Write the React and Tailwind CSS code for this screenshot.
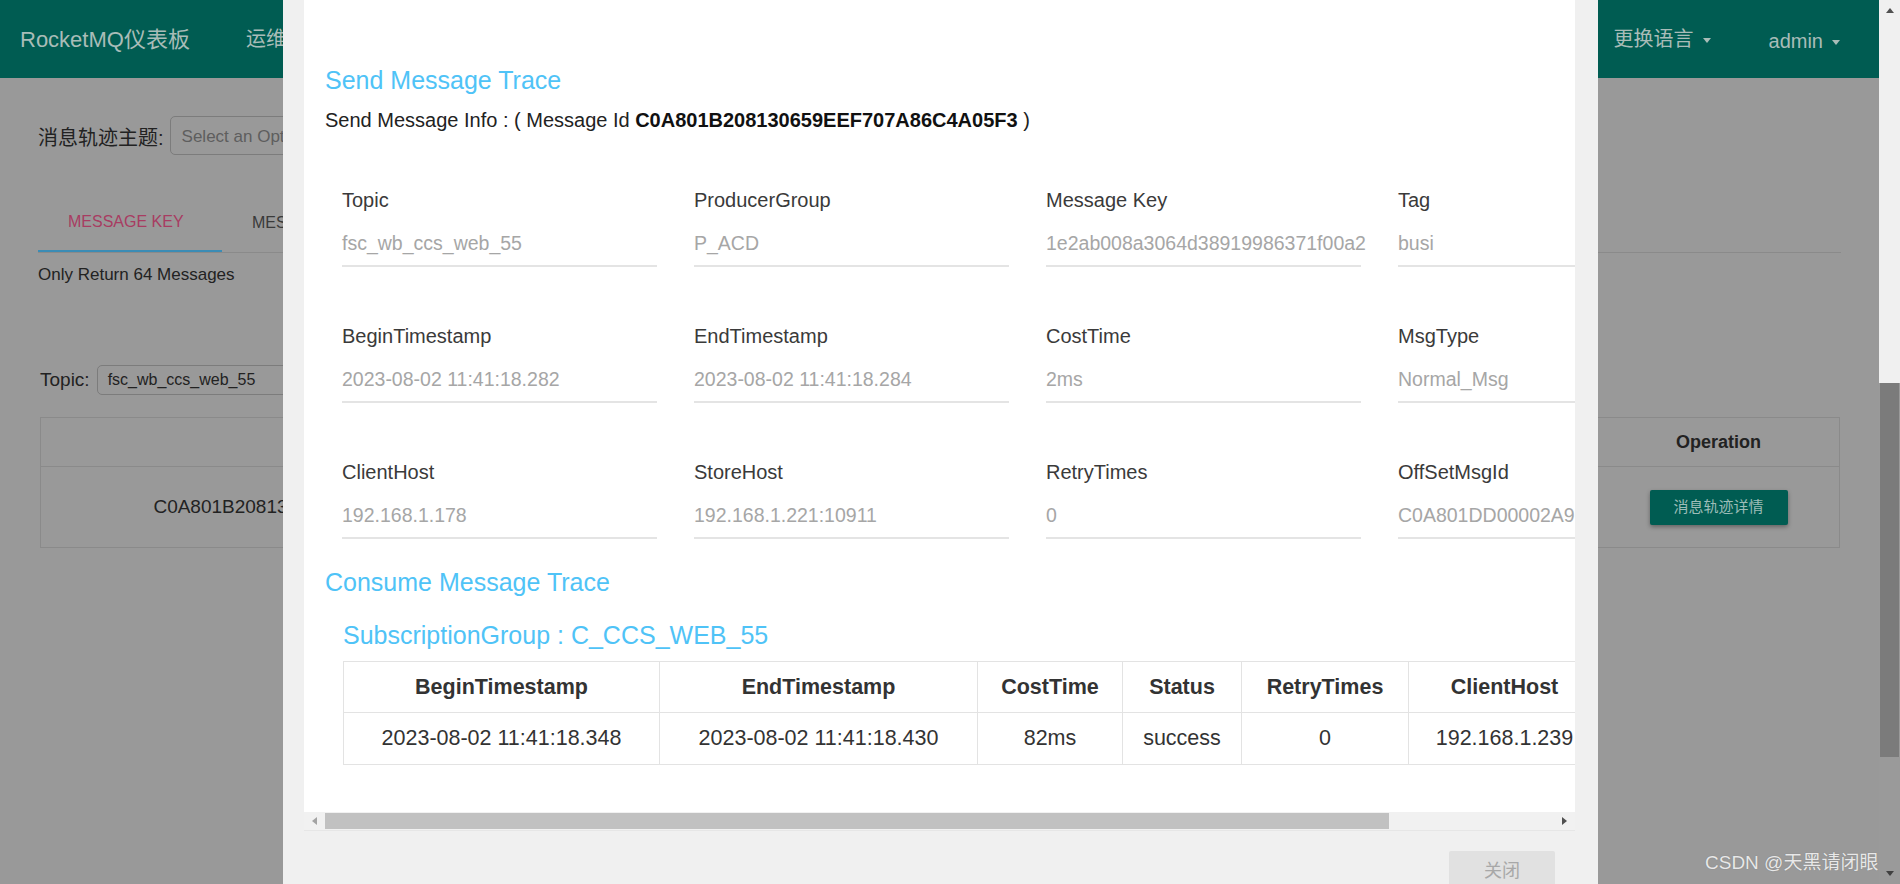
import React from 'react';

const fields = [
  [
    ['Topic', 'fsc_wb_ccs_web_55'],
    ['ProducerGroup', 'P_ACD'],
    ['Message Key', '1e2ab008a3064d38919986371f00a2'],
    ['Tag', 'busi'],
  ],
  [
    ['BeginTimestamp', '2023-08-02 11:41:18.282'],
    ['EndTimestamp', '2023-08-02 11:41:18.284'],
    ['CostTime', '2ms'],
    ['MsgType', 'Normal_Msg'],
  ],
  [
    ['ClientHost', '192.168.1.178'],
    ['StoreHost', '192.168.1.221:10911'],
    ['RetryTimes', '0'],
    ['OffSetMsgId', 'C0A801DD00002A9F0000000000B7C9E2'],
  ],
];

const consumeCols = ['BeginTimestamp', 'EndTimestamp', 'CostTime', 'Status', 'RetryTimes', 'ClientHost'];
const consumeRow = ['2023-08-02 11:41:18.348', '2023-08-02 11:41:18.430', '82ms', 'success', '0', '192.168.1.239'];

const Caret = ({ className = '' }) => (
  <span className={`inline-block ml-[9px] border-x-[4px] border-x-transparent border-t-[5px] border-t-[#a9bcb8] align-middle ${className}`} />
);

const Field = ({ label, value }) => (
  <div className="border-b-2 border-[#e4e4e4] pb-[10px]">
    <div className="text-[20px] leading-[24px] text-[#3a3a3a] whitespace-nowrap">{label}</div>
    <div className="mt-[19px] text-[19.5px] leading-[24px] text-[#a6a6a6] whitespace-nowrap">{value}</div>
  </div>
);

const Background = () => (
  <div className="flex h-full">
    <div className="w-[1879px] h-full bg-[#999999]">
      <header className="h-[78px] bg-[#005c52] flex items-center text-[#a9bcb8]">
        <div className="pl-5 text-[22px]">RocketMQ仪表板</div>
        <div className="ml-[56px] text-[20px]">运维</div>
        <div className="ml-auto flex items-center pr-[39px] text-[20px]">
          <span>更换语言<Caret /></span>
          <span className="ml-[58px] mt-[4px]">admin<Caret /></span>
        </div>
      </header>

      <div className="px-[38px] pt-[38px]">
        <div className="flex items-center h-[39px]">
          <span className="text-[20px] text-[#222] mt-[4px]">消息轨迹主题:</span>
          <div className="ml-[6px] h-[39px] w-[420px] rounded-[5px] border border-[#7c7c7c] flex items-center pl-[11px] pt-[3px] text-[17px] text-[#5e5e5e]">
            Select an Option
          </div>
        </div>

        <div className="mt-[39px] flex border-b border-[#8a8a8a]">
          <div className="h-[58px] w-[184px] pl-[30px] flex items-center border-b-2 border-[#3b8cb5] text-[16px] text-[#a83c62] -mb-px whitespace-nowrap">
            MESSAGE KEY
          </div>
          <div className="h-[58px] pl-[30px] flex items-center text-[16px] text-[#3a3a3a]">MESSAGE ID</div>
        </div>

        <div className="mt-[12px] text-[17px] leading-[20px] text-[#222]">Only Return 64 Messages</div>

        <div className="mt-[80px] flex items-center h-[30px]">
          <span className="ml-[2px] text-[19px] text-[#222]">Topic:</span>
          <div className="ml-[7px] h-[30px] w-[300px] rounded-[5px] border border-[#7c7c7c] flex items-center pl-[10px] text-[16px] text-[#222]">
            fsc_wb_ccs_web_55
          </div>
        </div>

        <table className="mt-[22px] ml-[2px] w-[1799px] table-fixed border-collapse text-[#222]">
          <colgroup>
            <col className="w-[585px]" />
            <col className="w-[340px]" />
            <col className="w-[300px]" />
            <col className="w-[332px]" />
            <col className="w-[242px]" />
          </colgroup>
          <thead>
            <tr className="h-[49px]">
              <th className="border border-[#8a8a8a] text-[18px] font-bold">Message ID</th>
              <th className="border border-[#8a8a8a] text-[18px] font-bold">Tag</th>
              <th className="border border-[#8a8a8a] text-[18px] font-bold">Message Key</th>
              <th className="border border-[#8a8a8a] text-[18px] font-bold">StoreTime</th>
              <th className="border border-[#8a8a8a] text-[18px] font-bold">Operation</th>
            </tr>
          </thead>
          <tbody>
            <tr className="h-[81px]">
              <td className="border border-[#8a8a8a] text-center text-[19px]">C0A801B208130659EEF707A86C4A05F3</td>
              <td className="border border-[#8a8a8a] text-center text-[19px]">busi</td>
              <td className="border border-[#8a8a8a] text-center text-[19px]">1e2ab008a3064d38919986371f00a2</td>
              <td className="border border-[#8a8a8a] text-center text-[19px]">2023-08-02 11:41:18</td>
              <td className="border border-[#8a8a8a] text-center">
                <button className="h-[35px] w-[138px] rounded-[2px] bg-[#005c52] text-[15px] text-[#9dbdb8] shadow-[0_2px_4px_rgba(0,0,0,0.35)]">
                  消息轨迹详情
                </button>
              </td>
            </tr>
          </tbody>
        </table>
      </div>
    </div>

    <div className="w-[21px] h-full flex flex-col">
      <div className="h-[383px] bg-[#f0f0f0] flex justify-center pt-[8px]">
        <span className="block h-0 w-0 border-x-[4px] border-x-transparent border-b-[5px] border-b-[#505050]" />
      </div>
      <div className="h-[374px] bg-[#9a9a9a] px-[1px]">
        <div className="h-full bg-[#7b7b7b]" />
      </div>
      <div className="flex-1 bg-[#9a9a9a] flex items-end justify-center pb-[8px]">
        <span className="block h-0 w-0 border-x-[4px] border-x-transparent border-t-[5px] border-t-[#404040]" />
      </div>
    </div>
  </div>
);

const Modal = () => (
  <div className="absolute left-[283px] top-0 w-[1315px] h-[884px] bg-[#f0f0f0]">
    <div className="ml-[21px] w-[1271px] bg-white">
      <div className="h-[812px] overflow-hidden pl-[21px] pt-[64px]">
        <h3 className="text-[25px] leading-[32px] text-[#4fc3f7] whitespace-nowrap">Send Message Trace</h3>
        <p className="mt-[10px] text-[20px] leading-[28px] text-[#222] whitespace-nowrap">
          Send Message Info : ( Message Id <b className="text-[#111]">C0A801B208130659EEF707A86C4A05F3</b> )
        </p>

        <div className="mt-[54px] ml-[17px] w-max grid grid-cols-[repeat(4,315px)] gap-x-[37px] gap-y-[57px]">
          {fields.flat().map(([label, value]) => (
            <Field key={label} label={label} value={value} />
          ))}
        </div>

        <h3 className="mt-[27px] text-[25px] leading-[32px] text-[#4fc3f7] whitespace-nowrap">Consume Message Trace</h3>
        <h4 className="mt-[21px] ml-[18px] text-[25px] leading-[32px] text-[#4fc3f7] whitespace-nowrap">
          SubscriptionGroup : C_CCS_WEB_55
        </h4>

        <table className="mt-[10px] ml-[18px] w-[1257px] table-fixed border-collapse text-[#333]">
          <colgroup>
            <col className="w-[316px]" />
            <col className="w-[318px]" />
            <col className="w-[145px]" />
            <col className="w-[119px]" />
            <col className="w-[167px]" />
            <col className="w-[192px]" />
          </colgroup>
          <thead>
            <tr className="h-[51px]">
              {consumeCols.map((c) => (
                <th key={c} className="border border-[#e3e3e3] text-[21.5px] font-bold whitespace-nowrap">{c}</th>
              ))}
            </tr>
          </thead>
          <tbody>
            <tr className="h-[52px]">
              {consumeRow.map((v, i) => (
                <td key={i} className="border border-[#e3e3e3] text-center text-[21.5px] whitespace-nowrap">{v}</td>
              ))}
            </tr>
          </tbody>
        </table>
      </div>

      <div className="h-[19px] bg-[#f1f1f1] border-b border-[#e6e6e6] flex items-center">
        <div className="w-[21px] flex justify-center">
          <span className="block h-0 w-0 border-y-[4px] border-y-transparent border-r-[5px] border-r-[#a3a3a3]" />
        </div>
        <div className="w-[1064px] h-[16px] bg-[#c1c1c1]" />
        <div className="flex-1" />
        <div className="w-[21px] flex justify-center">
          <span className="block h-0 w-0 border-y-[4px] border-y-transparent border-l-[5px] border-l-[#505050]" />
        </div>
      </div>
    </div>

    <div className="flex justify-end pr-[43px] pt-[20px]">
      <button className="h-[40px] w-[106px] bg-[#e1e1e1] text-[18px] text-[#a8a8a8] rounded-[2px]">关闭</button>
    </div>
  </div>
);

export default function App() {
  return (
    <div className="relative w-[1900px] h-[884px] overflow-hidden font-['Liberation_Sans','Noto_Sans_CJK_SC',Arial,sans-serif]">
      <Background />
      <Modal />
      <div className="absolute left-[1705px] top-[851px] text-[19px] leading-[24px] text-[#e8e8e8] whitespace-nowrap [text-shadow:0_0_1px_rgba(0,0,0,0.25)]">
        CSDN @天黑请闭眼
      </div>
    </div>
  );
}
